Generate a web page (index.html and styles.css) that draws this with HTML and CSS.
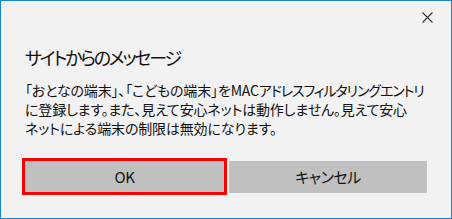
FILE: index.html
```html
<!DOCTYPE html>
<html lang="ja">
<head>
    <meta charset="UTF-8">
    <title>サイトからのメッセージ</title>
    <link rel="stylesheet" href="styles.css">
</head>
<body>
    <div class="dialog">
        <div class="top-bar">
            <button class="close-btn" aria-label="閉じる">
                <svg width="11" height="11" viewBox="0 0 11 11">
                    <path d="M0.5 0.5 L10.5 10.5 M10.5 0.5 L0.5 10.5" stroke="#333" stroke-width="1.1" fill="none"/>
                </svg>
            </button>
        </div>
        <h1 class="title">サイトからのメッセージ</h1>
        <p class="message">「おとなの端末」、「こどもの端末」をMAC<span class="kana">アドレスフィルタリングエントリ</span><br>に登録します。また、見えて安心ネットは動作しません。見えて安心<br>ネットによる端末の制限は無効になります。</p>
        <div class="buttons">
            <button class="btn btn-ok">OK</button>
            <button class="btn btn-cancel">キャンセル</button>
        </div>
    </div>
</body>
</html>
```

FILE: styles.css
```css
* {
    margin: 0;
    padding: 0;
    box-sizing: border-box;
    font-family: "Noto Sans CJK JP", "Noto Sans", sans-serif;
}

body {
    background-color: #f2f2f2;
}

.dialog {
    width: 452px;
    height: 219px;
    border: 1px solid #1883d7;
    background-color: #f2f2f2;
    display: flex;
    flex-direction: column;
}

.top-bar {
    display: flex;
    justify-content: flex-end;
    padding: 11px 18px 0 0;
    height: 30px;
}

.close-btn {
    background: none;
    border: none;
    width: 11px;
    height: 11px;
    display: flex;
}

.title {
    font-size: 18px;
    font-weight: normal;
    line-height: 28px;
    color: #111;
    padding-left: 24px;
    margin-top: 12px;
    letter-spacing: -2.2px;
    font-feature-settings: "palt";
}

.message {
    font-size: 14px;
    line-height: 19px;
    color: #111;
    padding-left: 24px;
    margin-top: 10px;
    letter-spacing: -0.15px;
    white-space: nowrap;
    font-feature-settings: "palt";
}

.message .kana {
    letter-spacing: -1.1px;
}

.buttons {
    display: flex;
    align-items: center;
    padding-left: 21px;
    margin-top: 20px;
}

.btn {
    background-color: #c0c0c0;
    border: none;
    font-size: 15px;
    color: #111;
    letter-spacing: -0.5px;
    font-feature-settings: "palt";
}

.btn-ok {
    width: 205px;
    height: 37px;
    border: 3px solid #ff0000;
    box-shadow: 0 0 0 1px #ffffff;
}

.btn-cancel {
    width: 198px;
    height: 32px;
    margin-left: 2px;
}
```
